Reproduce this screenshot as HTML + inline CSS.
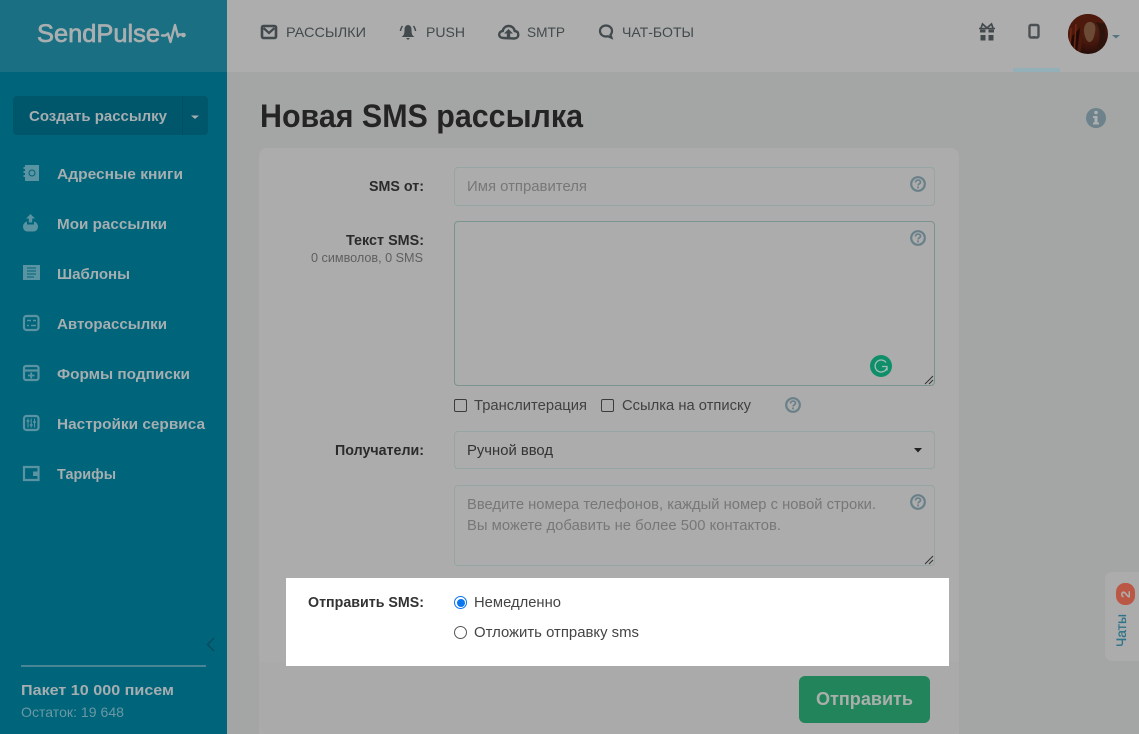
<!DOCTYPE html>
<html lang="ru"><head><meta charset="utf-8"><title>Новая SMS рассылка</title>
<style>
html,body{margin:0;padding:0;width:1139px;height:734px;overflow:hidden;background:#a4a6a5}
.b{position:absolute;box-sizing:border-box}
svg{position:absolute;left:0;top:0}
text{font-family:"Liberation Sans","Noto Sans CJK JP",sans-serif;white-space:pre}
.m{font-size:15px;font-weight:700;fill:#a5aeb1}
.l{font-size:14.5px;font-weight:700;fill:#2b2b2b}
.n{font-size:14px;fill:#424a4d}
.r{font-size:14.5px;fill:#414141}
.p{font-size:14.5px;fill:#767777}
</style></head><body>
<div class="b" style="left:0;top:0;width:227px;height:734px;background:#00647a"></div>
<div class="b" style="left:0;top:0;width:227px;height:72px;background:#1a6f83"></div>
<div class="b" style="left:227px;top:0;width:912px;height:72px;background:#adadad"></div>
<div class="b" style="left:1013px;top:68px;width:47px;height:4px;background:#93b0b8"></div>
<div class="b" style="left:13px;top:96px;width:195px;height:39px;background:#00566a;border-radius:4px"></div>
<div class="b" style="left:182px;top:96px;width:1px;height:39px;background:#005064"></div>
<div class="b" style="left:21px;top:665px;width:185px;height:2px;background:#4a8595"></div>
<div class="b" style="left:259px;top:148px;width:700px;height:586px;background:#acacac;border-radius:8px 8px 0 0"></div>
<div class="b" style="left:259px;top:662px;width:700px;height:72px;background:#a9aaa9;border-radius:0 0 8px 8px"></div>
<div class="b" style="left:454px;top:167px;width:481px;height:39px;border:1px solid #95a5a3;border-radius:4px"></div>
<div class="b" style="left:454px;top:221px;width:481px;height:165px;border:1px solid #7a938f;border-radius:4px"></div>
<div class="b" style="left:454px;top:431px;width:481px;height:38px;border:1px solid #95a5a3;border-radius:4px"></div>
<div class="b" style="left:454px;top:485px;width:481px;height:81px;border:1px solid #95a5a3;border-radius:4px"></div>
<div class="b" style="left:454px;top:399px;width:13px;height:13px;border:1px solid #3c3c3c;border-radius:2px"></div>
<div class="b" style="left:601px;top:399px;width:13px;height:13px;border:1px solid #3c3c3c;border-radius:2px"></div>
<div class="b" style="left:286px;top:578px;width:663px;height:88px;background:#fff"></div>
<div class="b" style="left:454px;top:596px;width:13px;height:13px;border:1.5px solid #0a75f0;border-radius:50%;background:#fff"></div>
<div class="b" style="left:456.5px;top:598.5px;width:8px;height:8px;border-radius:50%;background:#0a75f0"></div>
<div class="b" style="left:454px;top:626px;width:13px;height:13px;border:1px solid #555;border-radius:50%;background:#fff"></div>
<div class="b" style="left:799px;top:676px;width:131px;height:47px;background:#21845a;border-radius:6px"></div>
<div class="b" style="left:1105px;top:572px;width:34px;height:89px;background:#acacac;border-radius:7px 0 0 7px"></div>
<div class="b" style="left:1116px;top:583px;width:19px;height:22px;background:#bb5745;border-radius:9px"></div>

<svg width="1139" height="734" viewBox="0 0 1139 734" xmlns="http://www.w3.org/2000/svg">
<defs>
<radialGradient id="av" cx=".55" cy=".4" r=".7"><stop offset="0" stop-color="#4f2a18"/><stop offset=".5" stop-color="#45160c"/><stop offset="1" stop-color="#170a08"/></radialGradient>
<clipPath id="ac"><circle cx="1088" cy="34" r="20"/></clipPath>
</defs>
<!-- logo -->
<text x="37" y="42" font-size="25" fill="#a9afb0" stroke="#a9afb0" stroke-width=".7" textLength="123" lengthAdjust="spacingAndGlyphs">SendPulse</text>
<path d="M162 35.500h3.500l2.500-2 2.500 8.500 4.500-17 3 11.500 1-2h4" fill="none" stroke="#a9afb0" stroke-width="2.400" stroke-linejoin="round" stroke-linecap="round"/>
<circle cx="183.500" cy="35" r="2.300" fill="#a9afb0"/>
<!-- button -->
<text class="m" x="29" y="121" textLength="138" lengthAdjust="spacingAndGlyphs">Создать рассылку</text>
<path d="M191 115.500h8l-4 3.500z" fill="#a5aeb1"/>
<!-- menu -->
<text class="m" x="57" y="179" textLength="126" lengthAdjust="spacingAndGlyphs">Адресные книги</text>
<text class="m" x="57" y="229" textLength="110" lengthAdjust="spacingAndGlyphs">Мои рассылки</text>
<text class="m" x="57" y="279" textLength="73" lengthAdjust="spacingAndGlyphs">Шаблоны</text>
<text class="m" x="57" y="329" textLength="110" lengthAdjust="spacingAndGlyphs">Авторассылки</text>
<text class="m" x="57" y="379" textLength="133" lengthAdjust="spacingAndGlyphs">Формы подписки</text>
<text class="m" x="57" y="429" textLength="148" lengthAdjust="spacingAndGlyphs">Настройки сервиса</text>
<text class="m" x="57" y="479" textLength="59" lengthAdjust="spacingAndGlyphs">Тарифы</text>
<g fill="#5a93a2" stroke="none">
<path d="M25 165h14v16H25zM23.500 167h1.500v2h-1.500zM23.500 171h1.500v2h-1.500zM23.500 175h1.500v2h-1.500z"/>
<path d="M30.500 214l-4.500 4.500h2.800v4h3.400v-4H35z"/>
<path d="M27 221.500v3h7v-3c2 .5 4 2.500 4 5 0 3-2 5-4.500 5h-6c-2.500 0-4.500-2-4.500-5 0-2.500 2-4.500 4-5z"/>
<path d="M23 265h17v15H23z"/>
</g>
<circle cx="32" cy="173" r="3" fill="none" stroke="#00647a" stroke-width="1"/>
<path d="M27 268h9M27 271h9M27 274h9M27 277h7" stroke="#00647a" stroke-width="1" fill="none"/>
<g fill="none" stroke="#5a93a2" stroke-width="2.200">
<rect x="24" y="316" width="14.500" height="14" rx="2.500"/>
<rect x="24" y="366" width="14.500" height="14" rx="2"/>
<path d="M24 370.500h14"/>
<rect x="24" y="416" width="14.500" height="14" rx="2.500"/>
<path d="M24 467h14.500v13H24zM24 467v13"/>
</g>
<path d="M27 320.500h4M33 320.500h3M27 325.500h2M31 325.500h5" stroke="#5a93a2" stroke-width="1.500"/>
<path d="M28 375.500h6.500M31.200 372.500v6" stroke="#5a93a2" stroke-width="1.800"/>
<path d="M28 418.500v9M31.200 418.500v9M34.500 418.500v9" stroke="#5a93a2" stroke-width="1.100"/>
<path d="M26.500 421h3M29.700 425h3M33 422h3" stroke="#5a93a2" stroke-width="1.600"/>
<path d="M33 471.500h5.500v4.500H33z" fill="#5a93a2"/>
<!-- sidebar bottom -->
<path d="M214 638l-6.500 6.500 6.500 6.500" fill="none" stroke="#0c4a5c" stroke-width="1.300"/>
<text class="m" x="21" y="695" textLength="153" lengthAdjust="spacingAndGlyphs">Пакет 10 000 писем</text>
<text x="21" y="717" font-size="14" fill="#6a98a4" textLength="103" lengthAdjust="spacingAndGlyphs">Остаток: 19 648</text>
<!-- top nav -->
<rect x="262" y="26" width="14" height="12" rx="1.500" fill="none" stroke="#424a4d" stroke-width="2.600"/>
<path d="M263.500 28l5.500 5 5.500-5" fill="none" stroke="#424a4d" stroke-width="2.200"/>
<text class="n" x="286" y="37" textLength="80" lengthAdjust="spacingAndGlyphs">РАССЫЛКИ</text>
<path d="M401.500 37c2.500-1.500 3-3.500 3-7.500 0-3 1.800-4.500 3.500-4.500s3.500 1.500 3.500 4.500c0 4 .5 6 3 7.500z" fill="#424a4d"/>
<path d="M406 38h4l-2 2z" fill="#424a4d"/>
<path d="M400.500 31c0-2 1-3.500 2-5M415.500 31c0-2-1-3.500-2-5" fill="none" stroke="#424a4d" stroke-width="1.500"/>
<text class="n" x="426" y="37" textLength="39" lengthAdjust="spacingAndGlyphs">PUSH</text>
<path d="M503.500 38c-2.800 0-4.300-1.500-4.300-3.500s1.500-3.300 3.500-3.500c.5-3 3-5 6-5 3.200 0 5.500 2.200 6 5 2.200.2 3.600 1.500 3.600 3.700 0 2.300-1.800 3.800-4.300 3.800z" fill="none" stroke="#424a4d" stroke-width="2.400"/>
<path d="M508.500 29l-4.500 4.500h2.800V38h3.400v-4.500h2.800z" fill="#424a4d"/>
<text class="n" x="527" y="37" textLength="38" lengthAdjust="spacingAndGlyphs">SMTP</text>
<path d="M606 36.500c-3.500 0-6-2.300-6-5.500s2.600-5.500 6-5.500 6 2.300 6 5.500c0 1.500-.5 2.800-1.500 3.800l1 3-3.500-1.500z" fill="none" stroke="#424a4d" stroke-width="2.200"/>
<text class="n" x="622" y="37" textLength="72" lengthAdjust="spacingAndGlyphs">ЧАТ-БОТЫ</text>
<!-- right icons -->
<path d="M980 29.500h5.500v3h-5.500zM988.500 29.500h5.500v3h-5.500zM980.500 35h5v5.500h-5zM988.500 35h5v5.500h-5z" fill="#424a4d"/>
<path d="M979 28.500h16" stroke="#424a4d" stroke-width="1.500"/>
<path d="M987 28l-4.500-4-1.500 4M987 28l4.500-4 1.500 4" fill="none" stroke="#424a4d" stroke-width="1.700"/>
<rect x="1029.500" y="25" width="9" height="12.500" rx="1.500" fill="none" stroke="#4a5053" stroke-width="2.400"/>
<path d="M1033 36.500h2" stroke="#4a5053" stroke-width="1"/>
<circle cx="1088" cy="34" r="20" fill="url(#av)"/>
<g clip-path="url(#ac)">
<path d="M1068 54V30c0-10 8-17 19-17 8 0 14 3 18 10l-10 0c-4-2-9-1-11 4-2 6-2 20-4 27z" fill="#4d190c"/>
<path d="M1084 30c0-5 3-9 7-8 4 1 5 5 4 10-1 5-2 9-5 10-3 1-6-6-6-12z" fill="#6b4a36"/>
<path d="M1095 22c5 4 6 13 3 23l-5 12h12V24z" fill="#2c140c"/>
<path d="M1080 28l-3 26h-8l3-18z" fill="#220b07"/>
<path d="M1076 24l-2 30M1071 28l-1 20" stroke="#702814" stroke-width="1.500" fill="none"/>
</g>
<path d="M1112 35h8l-4 3.500z" fill="#537681"/>
<!-- title -->
<text x="260" y="127" font-size="32" font-weight="700" fill="#242424" textLength="323" lengthAdjust="spacingAndGlyphs">Новая SMS рассылка</text>
<circle cx="1096" cy="118" r="10" fill="#6d828a"/>
<circle cx="1096" cy="112.500" r="1.800" fill="#adb0b1"/>
<path d="M1093 116h4.500v6.500h1.500v2h-6v-2h1.500v-4.500H1093z" fill="#adb0b1"/>
<!-- labels -->
<text class="l" x="369" y="191" textLength="55" lengthAdjust="spacingAndGlyphs">SMS от:</text>
<text class="l" x="346" y="245" textLength="78" lengthAdjust="spacingAndGlyphs">Текст SMS:</text>
<text x="311" y="262" font-size="12.500" fill="#5e6060" textLength="112" lengthAdjust="spacingAndGlyphs">0 символов, 0 SMS</text>
<text class="l" x="335" y="455" textLength="89" lengthAdjust="spacingAndGlyphs">Получатели:</text>
<text class="p" x="467" y="191" textLength="120" lengthAdjust="spacingAndGlyphs">Имя отправителя</text>
<text class="r" x="474" y="410" textLength="113" lengthAdjust="spacingAndGlyphs">Транслитерация</text>
<text class="r" x="622" y="410" textLength="129" lengthAdjust="spacingAndGlyphs">Ссылка на отписку</text>
<text x="467" y="455" font-size="14.500" fill="#333" textLength="86" lengthAdjust="spacingAndGlyphs">Ручной ввод</text>
<path d="M914 448h8l-4 4.500z" fill="#222"/>
<text class="p" x="467" y="509" textLength="409" lengthAdjust="spacingAndGlyphs">Введите номера телефонов, каждый номер с новой строки.</text>
<text class="p" x="467" y="530" textLength="314" lengthAdjust="spacingAndGlyphs">Вы можете добавить не более 500 контактов.</text>
<text class="l" x="308" y="607" textLength="116" lengthAdjust="spacingAndGlyphs" style="fill:#333">Отправить SMS:</text>
<text class="r" x="474" y="607" textLength="87" lengthAdjust="spacingAndGlyphs" style="fill:#444">Немедленно</text>
<text class="r" x="474" y="637" textLength="165" lengthAdjust="spacingAndGlyphs" style="fill:#444">Отложить отправку sms</text>
<!-- help icons -->
<g fill="none" stroke="#6a8089" stroke-width="2.200">
<circle cx="918" cy="184" r="6.800"/><circle cx="918" cy="238" r="6.800"/><circle cx="793" cy="405" r="6.800"/><circle cx="918" cy="502" r="6.800"/>
</g>
<g fill="none" stroke="#6a8089" stroke-width="1.700">
<path d="M915.500 182.500c0-3.200 5-3.200 5-.3 0 1.800-2.500 1.500-2.500 3.300"/>
<path d="M915.500 236.500c0-3.200 5-3.200 5-.3 0 1.800-2.500 1.500-2.500 3.300"/>
<path d="M790.500 403.500c0-3.200 5-3.200 5-.3 0 1.800-2.500 1.500-2.500 3.300"/>
<path d="M915.500 500.500c0-3.200 5-3.200 5-.3 0 1.800-2.500 1.500-2.500 3.300"/>
</g>
<g fill="#6a8089"><rect x="917.100" y="186.500" width="1.800" height="1.800"/><rect x="917.100" y="240.500" width="1.800" height="1.800"/><rect x="792.100" y="407.500" width="1.800" height="1.800"/><rect x="917.100" y="504.500" width="1.800" height="1.800"/></g>
<!-- grammarly -->
<circle cx="881" cy="366" r="11" fill="#0f8e6a"/>
<path d="M886 362.500a6 6 0 1 0 .8 5.500" fill="none" stroke="#a3bfb5" stroke-width="1.300"/>
<path d="M882 366.500h5v4" fill="none" stroke="#a3bfb5" stroke-width="1.300"/>
<!-- resizers -->
<path d="M925 384l8-8M929 384l4-4" stroke="#333" stroke-width="1" fill="none"/>
<path d="M925 564l8-8M929 564l4-4" stroke="#333" stroke-width="1" fill="none"/>
<!-- submit -->
<text x="816" y="705" font-size="18" font-weight="700" fill="#a9afab" textLength="97" lengthAdjust="spacingAndGlyphs">Отправить</text>
<!-- chats -->
<text transform="translate(1130 598) rotate(-90)" font-size="13" font-weight="700" fill="#b0aca9">2</text>
<text transform="translate(1126 647) rotate(-90)" font-size="13.500" fill="#2f7488" stroke="#2f7488" stroke-width=".25" textLength="33" lengthAdjust="spacingAndGlyphs">Чаты</text>
</svg>
</body></html>
